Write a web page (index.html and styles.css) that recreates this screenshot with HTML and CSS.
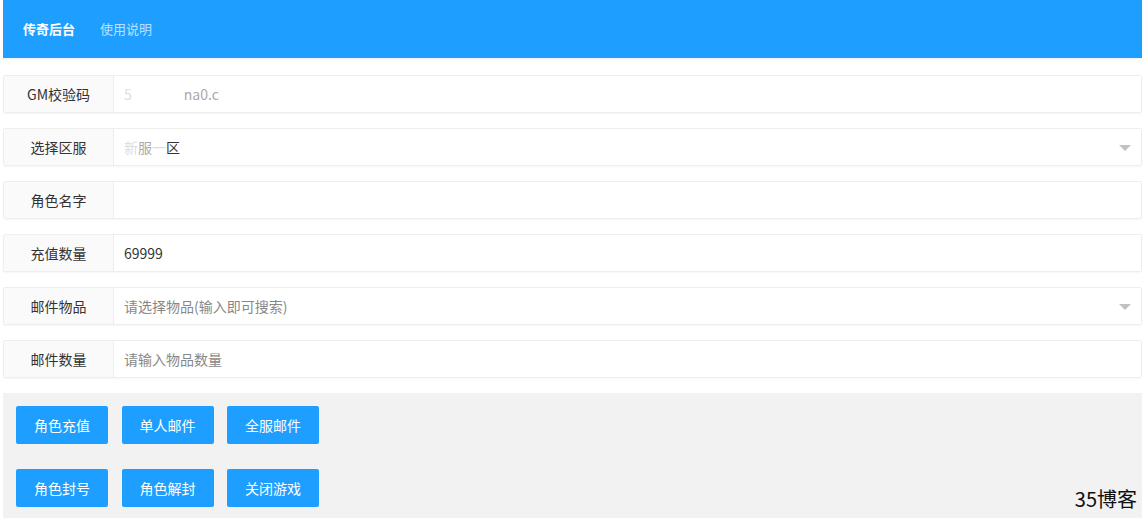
FILE: index.html
```html
<!DOCTYPE html>
<html lang="zh-CN">
<head>
    <meta charset="UTF-8">
    <meta name="viewport" content="width=device-width, initial-scale=1.0">
    <title>传奇后台</title>
    <link rel="stylesheet" href="styles.css">
</head>
<body>
    <div class="header">
        <a class="nav-item active">传奇后台</a>
        <a class="nav-item">使用说明</a>
    </div>
    <form class="gm-form">
        <div class="form-item">
            <label class="form-label">GM校验码</label>
            <div class="form-input"><span class="faint">5</span><span class="masked"></span><span class="dim">na0.c</span></div>
        </div>
        <div class="form-item">
            <label class="form-label">选择区服</label>
            <div class="form-input select"><span class="faint">新</span><span class="dim">服</span><span class="faint">一</span>区<i class="arrow"></i></div>
        </div>
        <div class="form-item">
            <label class="form-label">角色名字</label>
            <div class="form-input"></div>
        </div>
        <div class="form-item">
            <label class="form-label">充值数量</label>
            <div class="form-input">69999</div>
        </div>
        <div class="form-item">
            <label class="form-label">邮件物品</label>
            <div class="form-input select placeholder">请选择物品(输入即可搜索)<i class="arrow"></i></div>
        </div>
        <div class="form-item">
            <label class="form-label">邮件数量</label>
            <div class="form-input placeholder">请输入物品数量</div>
        </div>
        <div class="btn-panel">
            <div class="btn-row">
                <button type="button" class="btn">角色充值</button>
                <button type="button" class="btn">单人邮件</button>
                <button type="button" class="btn">全服邮件</button>
            </div>
            <div class="btn-row">
                <button type="button" class="btn">角色封号</button>
                <button type="button" class="btn">角色解封</button>
                <button type="button" class="btn">关闭游戏</button>
            </div>
        </div>
    </form>
    <div class="watermark">35博客</div>
</body>
</html>
```

FILE: styles.css
```css
body {
    margin: 0;
    padding: 0 3px;
    background-color: #ffffff;
    font-family: "Noto Sans CJK SC", "Noto Sans", sans-serif;
    font-size: 14px;
    color: #333333;
    height: 518px;
    box-sizing: border-box;
    overflow: hidden;
    position: relative;
}
.header {
    height: 58px;
    background-color: #1e9fff;
    display: flex;
    align-items: center;
    padding-left: 20px;
    padding-bottom: 2px;
    box-sizing: border-box;
    gap: 25px;
    box-shadow: 0 1px 2px rgba(0, 0, 0, 0.08);
}
.nav-item {
    font-size: 13px;
    color: rgba(255, 255, 255, 0.7);
}
.nav-item.active {
    color: #ffffff;
    font-weight: bold;
}
.gm-form {
    margin-top: 17px;
    display: flex;
    flex-direction: column;
    gap: 15px;
}
.form-item {
    display: flex;
    height: 38px;
    border: 1px solid #eeeeee;
    box-sizing: border-box;
    border-radius: 2px;
    box-shadow: 0 1px 2px rgba(0, 0, 0, 0.04);
}
.form-label {
    width: 109px;
    flex-shrink: 0;
    background-color: #fafafa;
    border-right: 1px solid #eeeeee;
    display: flex;
    align-items: center;
    justify-content: center;
}
.form-input {
    flex: 1;
    display: flex;
    align-items: center;
    padding-left: 10px;
    position: relative;
    background-color: #ffffff;
}
.form-input.placeholder {
    color: #888888;
}
.faint {
    color: #dddddd;
}
.dim {
    color: #aaaaaa;
}
.masked {
    display: inline-block;
    width: 52px;
}
.arrow {
    position: absolute;
    right: 10px;
    top: 16px;
    border-left: 6px solid transparent;
    border-right: 6px solid transparent;
    border-top: 6px solid #c2c2c2;
}
.btn-panel {
    background-color: #f2f2f2;
    padding: 13px 13px 0;
    box-sizing: border-box;
    display: flex;
    flex-direction: column;
    gap: 25px;
    height: 125px;
}
.btn-row {
    display: flex;
    gap: 13.5px;
}
.btn {
    width: 92px;
    height: 38px;
    background-color: #1e9fff;
    color: #ffffff;
    border: none;
    border-radius: 2px;
    font-family: inherit;
    font-size: 14px;
    padding: 0;
}
.watermark {
    position: absolute;
    right: 8px;
    top: 484px;
    font-size: 20px;
    color: #111111;
}
```
